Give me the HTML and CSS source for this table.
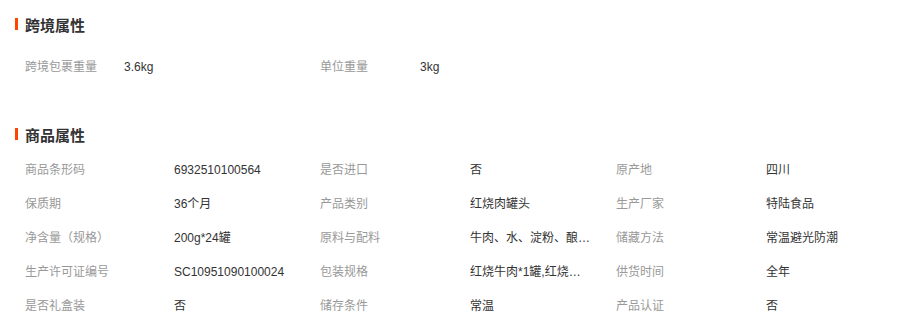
FILE: index.html
```html
<!DOCTYPE html>
<html lang="zh-CN">
<head>
<meta charset="utf-8">
<link rel="stylesheet" href="styles.css">
</head>
<body>
<div class="page">
  <section class="block">
    <h2 class="title"><span class="bar"></span>跨境属性</h2>
    <div class="grid grid-cross">
      <span class="label">跨境包裹重量</span><span class="value">3.6kg</span>
      <span class="label">单位重量</span><span class="value">3kg</span>
    </div>
  </section>
  <section class="block block-goods">
    <h2 class="title"><span class="bar"></span>商品属性</h2>
    <div class="grid grid-goods">
      <span class="label">商品条形码</span><span class="value">6932510100564</span>
      <span class="label">是否进口</span><span class="value">否</span>
      <span class="label">原产地</span><span class="value">四川</span>

      <span class="label">保质期</span><span class="value">36个月</span>
      <span class="label">产品类别</span><span class="value">红烧肉罐头</span>
      <span class="label">生产厂家</span><span class="value">特陆食品</span>

      <span class="label">净含量（规格）</span><span class="value">200g*24罐</span>
      <span class="label">原料与配料</span><span class="value">牛肉、水、淀粉、酿造酱油、白砂糖</span>
      <span class="label">储藏方法</span><span class="value">常温避光防潮</span>

      <span class="label">生产许可证编号</span><span class="value">SC10951090100024</span>
      <span class="label">包装规格</span><span class="value">红烧牛肉*1罐,红烧牛肉*24罐</span>
      <span class="label">供货时间</span><span class="value">全年</span>

      <span class="label">是否礼盒装</span><span class="value">否</span>
      <span class="label">储存条件</span><span class="value">常温</span>
      <span class="label">产品认证</span><span class="value">否</span>
    </div>
  </section>
</div>
</body>
</html>
```
FILE: styles.css
```css
html, body {
  margin: 0;
  padding: 0;
  background: #fff;
}
.page {
  font-family: "Liberation Sans", "Noto Sans CJK SC", sans-serif;
  font-size: 12px;
  color: #333;
  padding: 14px 10px 0 15px;
}
.title {
  display: flex;
  align-items: center;
  height: 20px;
  margin: 0;
  font-size: 15px;
  font-weight: bold;
  color: #333;
  font-family: "Noto Sans CJK SC", sans-serif;
}
.bar {
  width: 3px;
  height: 12px;
  background: #ff4400;
  margin-right: 7px;
}
.grid {
  display: grid;
  padding-left: 10px;
  line-height: 34px;
}
.grid-cross {
  margin-top: 16px;
  grid-template-columns: 99px 196px 100px 1fr;
}
.block-goods {
  margin-top: 40px;
}
.grid-goods {
  margin-top: 9px;
  grid-template-columns: 149px 146px 150px 146px 150px 1fr;
}
.label {
  color: #999;
  white-space: nowrap;
}
.value {
  color: #333;
  white-space: nowrap;
  overflow: hidden;
  text-overflow: ellipsis;
  margin-right: 24px;
}
```
